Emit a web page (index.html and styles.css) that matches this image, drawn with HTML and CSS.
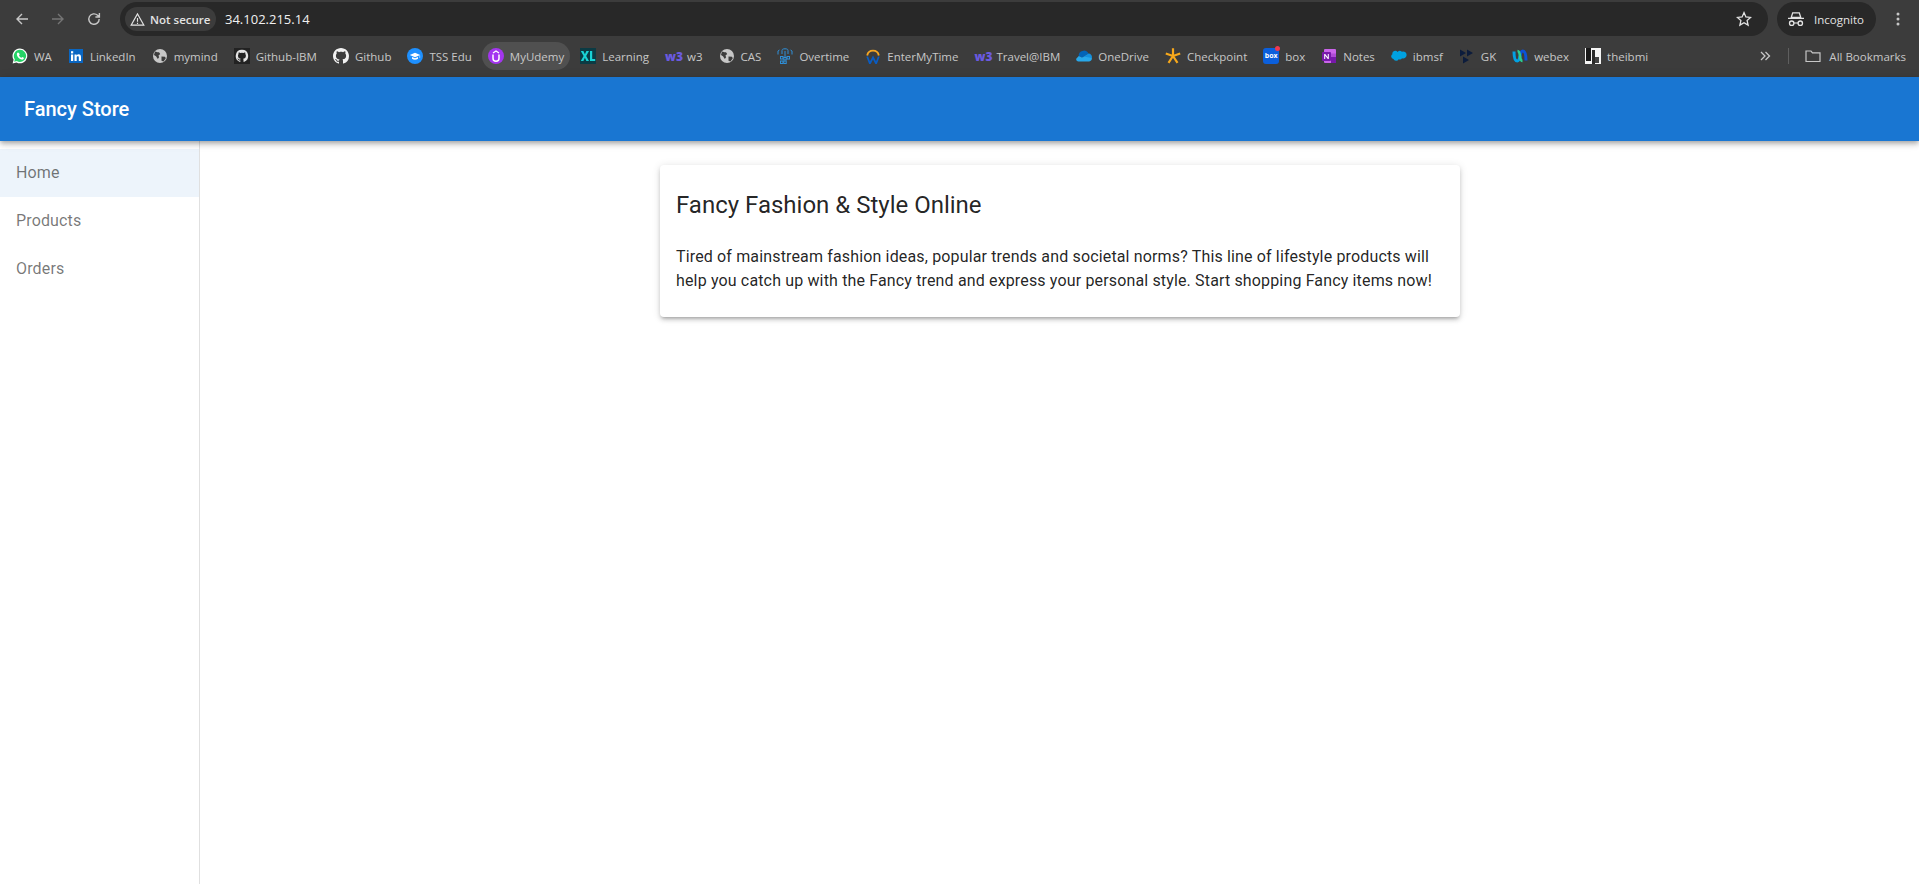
FILE: index.html
```html
<!DOCTYPE html>
<html lang="en">
<head>
    <meta charset="UTF-8">
    <meta name="viewport" content="width=device-width, initial-scale=1.0">
    <title>Fancy Store</title>
    <link rel="stylesheet" href="styles.css">
</head>
<body>
    <div class="browser-toolbar">
        <svg class="nav-icon" viewBox="0 0 16 16"><path d="M14 8H3M8 3 3 8l5 5" fill="none" stroke="#c7c7c7" stroke-width="1.4"/></svg>
        <svg class="nav-icon" viewBox="0 0 16 16"><path d="M2 8h11M8 3l5 5-5 5" fill="none" stroke="#757575" stroke-width="1.4"/></svg>
        <svg class="nav-icon" viewBox="0 0 16 16"><path d="M13.2 8a5.2 5.2 0 1 1-1.6-3.7L13.4 6M13.4 2v4h-4" fill="none" stroke="#c7c7c7" stroke-width="1.4"/></svg>
        <div class="omnibox">
            <div class="security-chip">
                <svg class="warn-icon" viewBox="0 0 16 16"><path d="M8 2 1.2 14h13.6zM8 6.500v4M8 11.500v1.200" fill="none" stroke="#e3e3e3" stroke-width="1.200"/></svg>
                <span>Not secure</span>
            </div>
            <span class="url">34.102.215.14</span>
            <svg class="star-icon" viewBox="0 0 16 16"><path d="m8 1.600 1.900 4.300 4.700.5-3.500 3.100 1 4.600L8 11.700l-4.100 2.400 1-4.600-3.500-3.100 4.700-.5z" fill="none" stroke="#e3e3e3" stroke-width="1.300"/></svg>
        </div>
        <div class="incognito">
            <svg class="incognito-icon" viewBox="0 0 18 16"><path d="M5.700 1.800h6.600l1.500 4.700H4.200zM1 7.300h16" fill="none" stroke="#e3e3e3" stroke-width="1.300"/><circle cx="4.700" cy="12.200" r="2.200" fill="none" stroke="#e3e3e3" stroke-width="1.300"/><circle cx="13.300" cy="12.200" r="2.200" fill="none" stroke="#e3e3e3" stroke-width="1.300"/><path d="M6.900 12h4.200" stroke="#e3e3e3" stroke-width="1.100"/></svg>
            <span>Incognito</span>
        </div>
        <svg class="menu-icon" viewBox="0 0 4 16"><circle cx="2" cy="3" r="1.500" fill="#c7c7c7"/><circle cx="2" cy="8" r="1.500" fill="#c7c7c7"/><circle cx="2" cy="13" r="1.500" fill="#c7c7c7"/></svg>
    </div>

    <div class="bookmarks-bar">
        <a class="bookmark">
            <svg viewBox="0 0 16 16"><path d="M8 .5a7.400 7.400 0 0 0-6.400 11.200L.6 15.500l3.900-1A7.400 7.400 0 1 0 8 .5z" fill="#fff"/><path d="M8 1.800a6.100 6.100 0 0 0-5.200 9.400l-.6 2.500 2.600-.6A6.100 6.100 0 1 0 8 1.800z" fill="#25d366"/><path d="M5.800 4.500c-.8.500-1.200 1.500-.8 2.700.6 1.900 2.500 3.900 4.500 4.400 1.200.3 2-.2 2.400-1l-.1-.8-1.500-.8-.8.800c-1-.3-2-1.300-2.500-2.400l.7-.8-.7-1.600z" fill="#fff"/></svg>
            WA
        </a>
        <a class="bookmark">
            <svg viewBox="0 0 16 16"><rect x="1" y="1" width="14" height="14" fill="#0a66c2"/><rect x="3" y="6.500" width="2.200" height="6.500" fill="#fff"/><rect x="3" y="3.200" width="2.200" height="2.200" fill="#fff"/><path d="M6.500 6.500h2.100v1c.5-.8 1.200-1.200 2.100-1.200 1.700 0 2.300 1.100 2.300 2.900V13h-2.200V9.700c0-.9-.3-1.400-1-1.400s-1.100.5-1.100 1.400V13H6.500z" fill="#fff"/></svg>
            LinkedIn
        </a>
        <a class="bookmark">
            <svg viewBox="0 0 16 16"><circle cx="8" cy="8" r="7" fill="#c7c7c7"/><path d="M3 3.500c1.500.2 2.500 1 4 .8l1.200 1.800-1.700 1.400.6 1.700-1.300 1.800L4 8.200 2 7zM9.500 8.500l3.500.3.800 1.400-2.300 3.300-2-.8z" fill="#3c3c3c"/></svg>
            mymind
        </a>
        <a class="bookmark">
            <svg viewBox="0 0 16 16"><rect width="16" height="16" fill="#222"/><path d="M8 1.800a6.200 6.200 0 0 0-2 12.100c.3 0 .4-.1.400-.3v-1.100c-1.600.3-2-.4-2.100-.7-.1-.2-.4-.7-.6-.9-.2-.1-.5-.4 0-.4.500 0 .8.400.9.600.6.900 1.400.7 1.800.5 0-.4.200-.7.400-.8-1.400-.2-2.800-.7-2.800-3.100 0-.7.200-1.200.6-1.700 0-.1-.3-.8.100-1.600 0 0 .5-.2 1.700.6a6 6 0 0 1 3.100 0c1.200-.8 1.700-.6 1.700-.6.300.8.100 1.500.1 1.600.4.500.6 1 .6 1.700 0 2.400-1.400 2.900-2.800 3.100.2.200.4.600.4 1.100v1.700c0 .2.100.3.400.3A6.200 6.200 0 0 0 8 1.800z" fill="#e3e3e3"/></svg>
            Github-IBM
        </a>
        <a class="bookmark">
            <svg viewBox="0 0 16 16"><path d="M8 0C3.580 0 0 3.580 0 8c0 3.540 2.290 6.530 5.470 7.590.4.070.55-.17.55-.38 0-.19-.01-.82-.01-1.490-2.010.37-2.530-.49-2.690-.94-.09-.23-.48-.94-.82-1.130-.28-.15-.68-.52-.01-.53.63-.01 1.080.58 1.230.82.72 1.210 1.870.87 2.330.66.070-.52.28-.87.51-1.070-1.780-.2-3.640-.89-3.640-3.950 0-.87.31-1.590.82-2.150-.08-.2-.36-1.020.08-2.120 0 0 .67-.21 2.200.82.64-.18 1.320-.27 2-.27s1.360.09 2 .27c1.530-1.040 2.200-.82 2.200-.82.44 1.100.16 1.920.08 2.120.51.56.82 1.270.82 2.150 0 3.070-1.870 3.750-3.650 3.950.29.25.54.73.54 1.480 0 1.070-.01 1.930-.01 2.200 0 .21.15.46.55.38A8.013 8.013 0 0 0 16 8c0-4.420-3.580-8-8-8z" fill="#f1f1f1"/></svg>
            Github
        </a>
        <a class="bookmark">
            <svg viewBox="0 0 16 16"><circle cx="8" cy="8" r="8" fill="#1e90ff"/><path d="M2.800 7 8 4.800 13.200 7 8 9.200z" fill="#fff"/><path d="M5 9v1.800c1.800 1.200 4.200 1.200 6 0V9L8 10.300zM12.600 7.500h.5V10h-.5z" fill="#fff"/></svg>
            TSS Edu
        </a>
        <a class="bookmark bookmark-active">
            <svg viewBox="0 0 16 16"><circle cx="8" cy="8" r="8" fill="#a435f0"/><path d="M5 6.500v3.700a3 3 0 0 0 6 0V6.500" fill="none" stroke="#fff" stroke-width="1.500"/><path d="M5 5 8 3l3 2" fill="none" stroke="#fff" stroke-width="1.200"/></svg>
            MyUdemy
        </a>
        <a class="bookmark">
            <svg viewBox="0 0 16 16"><rect width="16" height="16" fill="#0b3b44"/><path d="M.8 3h2.600l1.500 3.200L6.400 3H9L6.200 8 9 13H6.400L4.900 9.800 3.400 13H.8l2.800-5z" fill="#19d3d6"/><path d="M10 3h2.200v8h3v2H10z" fill="#19d3d6"/></svg>
            Learning
        </a>
        <a class="bookmark">
            <span class="w3-mark">w3</span>
            w3
        </a>
        <a class="bookmark">
            <svg viewBox="0 0 16 16"><circle cx="8" cy="8" r="7" fill="#c7c7c7"/><path d="M3 3.500c1.500.2 2.500 1 4 .8l1.200 1.800-1.700 1.400.6 1.700-1.300 1.800L4 8.200 2 7zM9.500 8.500l3.500.3.800 1.400-2.300 3.300-2-.8z" fill="#3c3c3c"/></svg>
            CAS
        </a>
        <a class="bookmark">
            <svg viewBox="0 0 16 16"><g fill="none" stroke="#2f8fd8" stroke-width="1"><path d="M1 6.500V3l1.500-1M15 6.500V3l-1.500-1M5 6V2.500C5 1.300 6 .8 8 .8s3 .5 3 1.700V6M8 3v6"/><rect x="3.500" y="8.500" width="2.500" height="2.500"/><rect x="10" y="8.500" width="2.500" height="2.500"/><rect x="6.800" y="9.500" width="2.400" height="2.400"/><rect x="3.500" y="13" width="2.500" height="2.500"/><rect x="6.800" y="13" width="2.400" height="2.500"/></g></svg>
            Overtime
        </a>
        <a class="bookmark">
            <svg viewBox="0 0 16 16"><path d="M2.200 7.500a5.900 5.900 0 0 1 11.600 0" fill="none" stroke="#f5a623" stroke-width="1.800"/><path d="m2.200 8.500 2.700 7 3.100-6 3.100 6 2.700-7" fill="none" stroke="#0a5cc2" stroke-width="1.800"/></svg>
            EnterMyTime
        </a>
        <a class="bookmark">
            <span class="w3-mark">w3</span>
            Travel@IBM
        </a>
        <a class="bookmark">
            <svg viewBox="0 0 16 16"><path d="M6.500 3a4.200 4.200 0 0 1 5.900 2.600L6 9.500 2.800 8A4.200 4.200 0 0 1 6.500 3z" fill="#0364b8"/><path d="M12.400 5.600A3.400 3.400 0 0 1 15.800 10L9.500 11 6 9.500z" fill="#1490df"/><path d="M2.800 8 .2 10.800A2.300 2.300 0 0 0 2.600 13.500h10.600a2.900 2.900 0 0 0 2.600-3.500L9 8.800 6 9.500z" fill="#28a8ea"/></svg>
            OneDrive
        </a>
        <a class="bookmark">
            <svg viewBox="0 0 16 16"><path d="M8 .3v6.700M8 8 .8 5.500M8 8l7.200-2.500M8 8l-4.500 6.800M8 8l4.500 6.800" stroke="#f7a81b" stroke-width="2.200" fill="none"/></svg>
            Checkpoint
        </a>
        <a class="bookmark">
            <span class="box-mark">box</span>
            box
        </a>
        <a class="bookmark">
            <svg viewBox="0 0 16 16"><rect x="3" y="1" width="12" height="14" rx="1" fill="#ca64ea"/><rect x="10" y="5.500" width="5" height="3.500" fill="#ae4bd5"/><rect x="10" y="9" width="5" height="6" fill="#7719aa"/><rect x="1" y="4" width="9" height="9" rx="1" fill="#7719aa"/><path d="M3.200 11V6h1l2.600 3.300V6h1v5h-1L4.200 7.700V11z" fill="#fff"/></svg>
            Notes
        </a>
        <a class="bookmark">
            <svg viewBox="0 0 16 16"><path d="M6.600 4a2.900 2.900 0 0 1 4.300-.3 3.400 3.400 0 0 1 4.700 3.200 3.400 3.400 0 0 1-4.600 3.300 2.500 2.500 0 0 1-3.300 1 2.900 2.900 0 0 1-5.300-.3 2.500 2.500 0 0 1-1-4.600 2.900 2.900 0 0 1 5.200-2.300z" fill="#00a1e0"/></svg>
            ibmsf
        </a>
        <a class="bookmark">
            <svg viewBox="0 0 16 16"><path d="M1 1.500 7 5 1 8.500zM8 1.500 14 5 8 8.500zM4 8.500l6 3.500-6 3.500z" fill="#0c1c3c"/></svg>
            GK
        </a>
        <a class="bookmark">
            <svg viewBox="0 0 16 16"><path d="M2 3.500c0 6 1 9.500 3.300 9.500C7 13 7.500 10.500 8 8" fill="none" stroke="#02a1e2" stroke-width="3"/><path d="M8 8c.5-2.500 1-5 2.700-5C13 3 14 6.500 14 12.500" fill="none" stroke="#0c52d8" stroke-width="3"/><path d="M5.500 3C7.200 3 7.700 5.500 8 8s.8 5 2.500 5" fill="none" stroke="#2cce8f" stroke-width="2.600"/></svg>
            webex
        </a>
        <a class="bookmark">
            <svg viewBox="0 0 16 16"><rect width="16" height="16" fill="#f4f4f4"/><rect x="1" y="0" width="5" height="13" fill="#1a1a1a"/><rect x="7" y="2" width="3" height="14" fill="#2a2a2a"/><rect x="10" y="9" width="4" height="6" fill="#444"/></svg>
            theibmi
        </a>
        <div class="bookmarks-end">
            <svg class="chevrons" viewBox="0 0 12 12"><path d="m2 2 4 4-4 4M6.500 2l4 4-4 4" fill="none" stroke="#c7c7c7" stroke-width="1.300"/></svg>
            <div class="bar-separator"></div>
            <svg class="folder-icon" viewBox="0 0 16 16"><path d="M1 3h5l1.500 1.800H15V13.500H1z" fill="none" stroke="#c7c7c7" stroke-width="1.200"/></svg>
            <span class="all-bookmarks">All Bookmarks</span>
        </div>
    </div>

    <header class="app-bar">
        <h6 class="app-title">Fancy Store</h6>
    </header>

    <div class="app-body">
        <nav class="sidebar">
            <a class="nav-item nav-item-selected">Home</a>
            <a class="nav-item">Products</a>
            <a class="nav-item">Orders</a>
        </nav>
        <main class="content">
            <div class="card">
                <h5 class="card-title">Fancy Fashion &amp; Style Online</h5>
                <p class="card-text">Tired of mainstream fashion ideas, popular trends and societal norms? This line of lifestyle products will help you catch up with the Fancy trend and express your personal style. Start shopping Fancy items now!</p>
            </div>
        </main>
    </div>
</body>
</html>
```

FILE: styles.css
```css
* {
    box-sizing: border-box;
}
html, body {
    height: 100%;
}
body {
    display: flex;
    flex-direction: column;
    margin: 0;
    overflow: hidden;
    font-family: Roboto, sans-serif;
    background-color: #fff;
}

/* browser chrome */
.browser-toolbar {
    display: flex;
    align-items: center;
    height: 36px;
    padding-top: 2px;
    background-color: #3c3c3c;
    flex-shrink: 0;
}
.nav-icon {
    width: 16px;
    height: 16px;
    margin-left: 14px;
    margin-right: 6px;
}
.omnibox {
    display: flex;
    align-items: center;
    width: 1648px;
    height: 34px;
    margin-left: 12px;
    padding: 0 5px;
    background-color: #282828;
    border-radius: 17px;
}
.security-chip {
    display: flex;
    align-items: center;
    gap: 5px;
    width: 91px;
    height: 24px;
    padding-left: 5px;
    background-color: #3c3c3c;
    border-radius: 12px;
    font-family: "Open Sans", sans-serif;
    font-size: 11.500px;
    font-weight: 600;
    color: #e3e3e3;
    white-space: nowrap;
}
.warn-icon {
    width: 15px;
    height: 15px;
}
.url {
    margin-left: 9px;
    font-family: "Open Sans", sans-serif;
    font-size: 13px;
    color: #f1f1f1;
}
.star-icon {
    width: 16px;
    height: 16px;
    margin-left: auto;
    margin-right: 11px;
}
.incognito {
    display: flex;
    align-items: center;
    gap: 9px;
    width: 99px;
    height: 34px;
    margin-left: 9px;
    padding-left: 10px;
    background-color: #282828;
    border-radius: 17px;
    font-family: "Open Sans", sans-serif;
    font-size: 11.500px;
    color: #e3e3e3;
}
.incognito-icon {
    width: 18px;
    height: 16px;
}
.menu-icon {
    width: 4px;
    height: 16px;
    margin-left: 20px;
}
.bookmarks-bar {
    display: flex;
    align-items: flex-start;
    gap: 4px;
    height: 41px;
    padding: 6px 13px 0 6px;
    background-color: #3c3c3c;
    flex-shrink: 0;
    font-family: "Open Sans", sans-serif;
    font-size: 11.500px;
    color: #c7c7c7;
}
.bookmark {
    display: flex;
    align-items: center;
    gap: 6px;
    height: 28px;
    padding: 0 6px;
    border-radius: 14px;
    white-space: nowrap;
}
.bookmark svg {
    width: 16px;
    height: 16px;
    flex-shrink: 0;
}
.bookmark-active {
    background-color: #505050;
}
.w3-mark {
    width: 16px;
    font-weight: 800;
    font-size: 12px;
    color: #6a5ae0;
}
.box-mark {
    position: relative;
    width: 16px;
    height: 16px;
    background-color: #0b5fdc;
    border-radius: 3px;
    font-size: 7px;
    font-weight: 700;
    line-height: 16px;
    text-align: center;
    color: #fff;
}
.box-mark::after {
    content: "";
    position: absolute;
    top: -2px;
    right: -1px;
    width: 5px;
    height: 5px;
    background-color: #f0384f;
    border-radius: 50%;
}
.bookmarks-end {
    display: flex;
    align-items: center;
    height: 28px;
    margin-left: auto;
}
.chevrons {
    width: 12px;
    height: 12px;
}
.bar-separator {
    width: 1px;
    height: 16px;
    margin: 0 16px 0 17px;
    background-color: #5f5f5f;
}
.folder-icon {
    width: 16px;
    height: 16px;
    margin-right: 8px;
}

/* app */
.app-bar {
    position: relative;
    z-index: 1;
    display: flex;
    align-items: center;
    height: 64px;
    padding: 0 24px;
    background-color: #1976d2;
    color: #fff;
    box-shadow: 0 2px 4px -1px rgba(0, 0, 0, 0.2), 0 4px 5px 0 rgba(0, 0, 0, 0.14), 0 1px 10px 0 rgba(0, 0, 0, 0.12);
    flex-shrink: 0;
}
.app-title {
    margin: 0;
    font-size: 20px;
    font-weight: 500;
}
.app-body {
    display: flex;
    flex: 1;
    min-height: 0;
}
.sidebar {
    width: 200px;
    padding-top: 8px;
    border-right: 1px solid #e0e0e0;
    flex-shrink: 0;
}
.nav-item {
    display: flex;
    align-items: center;
    height: 48px;
    padding: 0 16px 2px;
    font-size: 16px;
    letter-spacing: 0.15px;
    color: rgba(0, 0, 0, 0.54);
}
.nav-item-selected {
    background-color: rgba(25, 118, 210, 0.08);
}
.content {
    flex: 1;
    padding: 24px 0 0 1px;
}
.card {
    width: 800px;
    margin: 0 auto;
    padding: 24px 16px;
    background-color: #fff;
    border-radius: 4px;
    box-shadow: 0 3px 3px -2px rgba(0, 0, 0, 0.2), 0 3px 4px 0 rgba(0, 0, 0, 0.14), 0 1px 8px 0 rgba(0, 0, 0, 0.12);
}
.card-title {
    margin: 0 0 24px;
    font-size: 24px;
    font-weight: 400;
    line-height: 32px;
    color: rgba(0, 0, 0, 0.87);
}
.card-text {
    margin: 0;
    font-size: 16px;
    line-height: 24px;
    letter-spacing: 0.15px;
    color: rgba(0, 0, 0, 0.87);
}
```
